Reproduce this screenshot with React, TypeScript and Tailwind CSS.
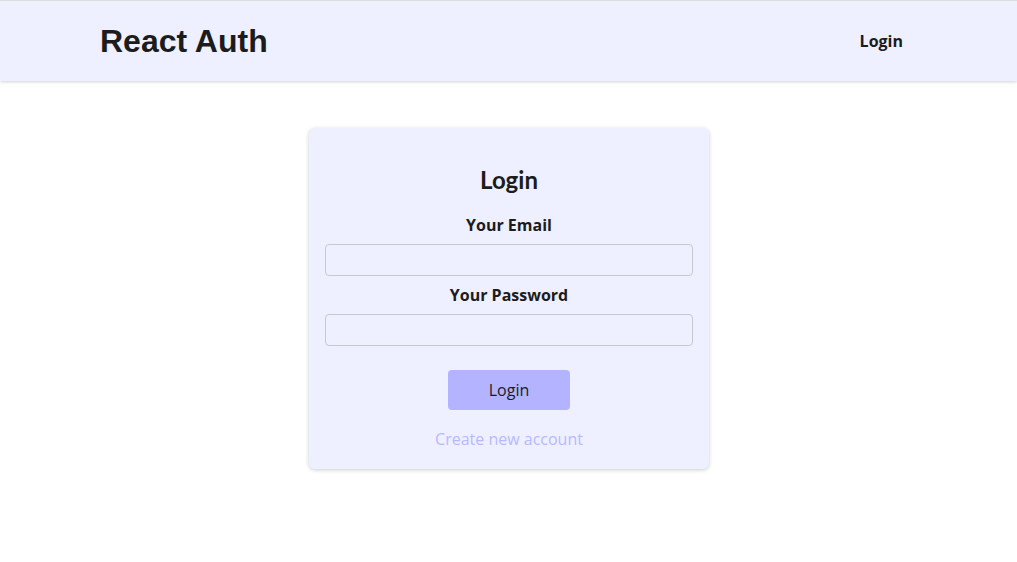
import React from "react";

export default function App() {
  return (
    <div className="min-h-screen bg-white" style={{ fontFamily: '"Open Sans", sans-serif' }}>
      <header className="h-[81px] border-t border-[#dcdcdc] bg-[#eef0ff] shadow-[0_1px_3px_rgba(0,0,0,0.18)] flex items-center justify-between pl-[100px] pr-[114px]">
        <div className="text-[32px] font-bold text-[#1c1c1c] leading-none" style={{ fontFamily: '"Liberation Sans", Arial, sans-serif' }}>
          React Auth
        </div>
        <nav>
          <a className="text-[16px] font-bold text-[#1c1c1c]">Login</a>
        </nav>
      </header>
      <main className="flex justify-center pt-[47px] pl-[1px]">
        <section className="w-[400px] rounded-[6px] bg-[#eef0ff] shadow-[0_1px_4px_rgba(0,0,0,0.2)] px-4 pt-[38px] pb-[18px] flex flex-col items-center">
          <h1 className="text-[24px] leading-[28px] font-bold text-[#1c1c1c]" style={{ fontFamily: 'Lato, sans-serif' }}>Login</h1>
          <form className="w-full flex flex-col items-stretch mt-[19px]">
            <label className="text-center text-[16px] leading-[24px] font-bold text-[#1c1c1c]">Your Email</label>
            <input type="email" className="mt-[7px] h-[32px] w-full rounded-[4px] border border-[#c8c8cc] bg-[#eef0ff]" />
            <label className="mt-[7px] text-center text-[16px] leading-[24px] font-bold text-[#1c1c1c]">Your Password</label>
            <input type="password" className="mt-[7px] h-[32px] w-full rounded-[4px] border border-[#c8c8cc] bg-[#eef0ff]" />
            <div className="flex flex-col items-center mt-[24px]">
              <button type="button" className="w-[122px] h-[40px] rounded-[4px] bg-[#b3b3ff] text-[16px] text-[#1c1c1c]">Login</button>
              <button type="button" className="mt-[17px] text-[16px] leading-[24px] text-[#b8b8ff]">Create new account</button>
            </div>
          </form>
        </section>
      </main>
    </div>
  );
}
